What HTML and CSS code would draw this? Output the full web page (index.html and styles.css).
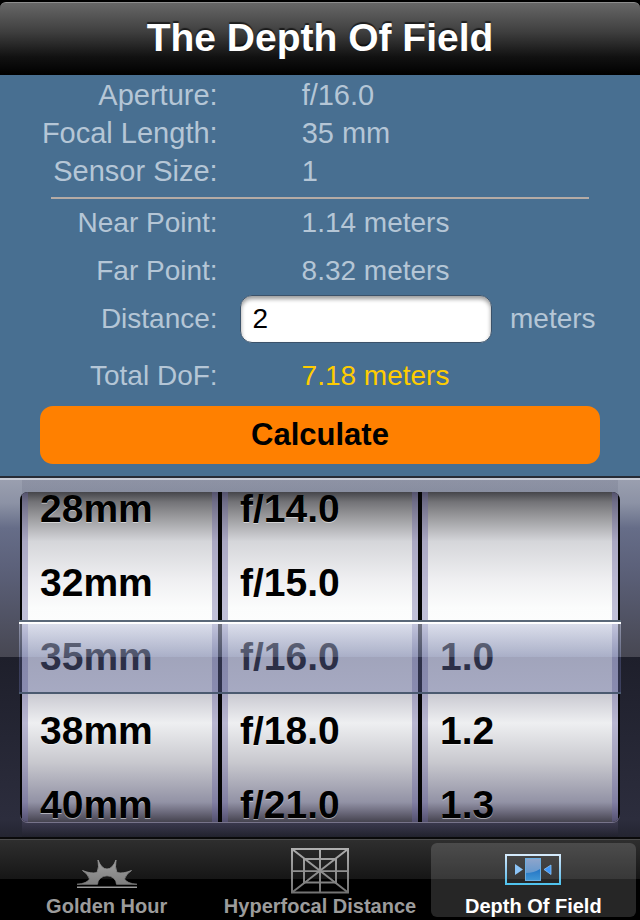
FILE: index.html
```html
<!DOCTYPE html>
<html lang="en">
<head>
  <meta charset="UTF-8" />
  <meta name="viewport" content="width=device-width, initial-scale=1.0"/>
  <title>The Depth Of Field</title>
  <link rel="stylesheet" href="styles.css">
</head>
<body>
  <header class="navbar">
    <h1>The Depth Of Field</h1>
  </header>

  <form class="panel">
    <!-- Lens settings -->
    <dl class="settings">
      <div class="row"><dt>Aperture:</dt><dd>f/16.0</dd></div>
      <div class="row"><dt>Focal Length:</dt><dd>35 mm</dd></div>
      <div class="row"><dt>Sensor Size:</dt><dd>1</dd></div>
    </dl>

    <!-- Results -->
    <dl class="results">
      <div class="row"><dt>Near Point:</dt><dd>1.14 meters</dd></div>
      <div class="row"><dt>Far Point:</dt><dd>8.32 meters</dd></div>
    </dl>
    <div class="distance">
      <label for="distance">Distance:</label>
      <input type="text" id="distance" value="2" inputmode="decimal" />
      <span>meters</span>
    </div>
    <dl class="total">
      <div class="row"><dt>Total DoF:</dt><dd>7.18 meters</dd></div>
    </dl>

    <button type="button" class="calculate">Calculate</button>
  </form>

  <!-- Picker wheels -->
  <section class="picker">
    <div class="wheels">
      <ul class="wheel" role="listbox" aria-label="Focal Length">
        <li role="option">28mm</li>
        <li role="option">32mm</li>
        <li role="option" aria-selected="true">35mm</li>
        <li role="option">38mm</li>
        <li role="option">40mm</li>
      </ul>
      <ul class="wheel" role="listbox" aria-label="Aperture">
        <li role="option">f/14.0</li>
        <li role="option">f/15.0</li>
        <li role="option" aria-selected="true">f/16.0</li>
        <li role="option">f/18.0</li>
        <li role="option">f/21.0</li>
      </ul>
      <ul class="wheel" role="listbox" aria-label="Sensor Size">
        <li class="empty" role="presentation"></li>
        <li class="empty" role="presentation"></li>
        <li role="option" aria-selected="true">1.0</li>
        <li role="option">1.2</li>
        <li role="option">1.3</li>
      </ul>
    </div>
    <div class="selection"></div>
  </section>

  <nav class="tabbar">
    <a href="#golden" class="tab">
      <svg width="60" height="50" viewBox="0 0 60 50" aria-hidden="true">
        <defs>
          <linearGradient id="grey" gradientUnits="userSpaceOnUse" x1="0" y1="0" x2="0" y2="50">
            <stop offset="0" stop-color="#b4b4b4"/>
            <stop offset="1" stop-color="#707070"/>
          </linearGradient>
        </defs>
        <path fill="url(#grey)" stroke="url(#grey)" stroke-width="0.8" d="M0 39.300 Q10 38.500 12.500 34 Q11 29 5.500 25.500 Q14 29 20 27.500 Q22.500 22 21 15 Q24.500 24 30 24 Q35.500 24 39 15 Q37.500 22 40 27.500 Q46 29 54.500 25.500 Q49 29 47.500 34 Q50 38.500 60 39.300 H39.500 A9.500 8.500 0 0 0 20.500 39.300 H0 Z"/>
        <path fill="#9a9a9a" d="M0 41.500 H60 V43 H0 Z"/>
      </svg>
      <span>Golden Hour</span>
    </a>
    <a href="#hyperfocal" class="tab">
      <svg width="60" height="50" viewBox="0 0 60 50" aria-hidden="true">
        <g fill="none" stroke="url(#grey)" stroke-width="2">
          <path d="M2 4 H58 V47.500 H2 Z M14 14 H46 V37.500 H14 Z"/>
          <path d="M2 4 L58 47.500 M58 4 L2 47.500 M30 4 V47.500"/>
          <path stroke-width="1.6" d="M2 26 H58 V26.100 H2"/>
        </g>
      </svg>
      <span>Hyperfocal Distance</span>
    </a>
    <a href="#dof" class="tab active" aria-current="page">
      <svg width="60" height="50" viewBox="0 0 60 50" aria-hidden="true">
        <defs>
          <linearGradient id="frame" x1="0" y1="0" x2="0" y2="1">
            <stop offset="0" stop-color="#d4eafb"/>
            <stop offset="0.55" stop-color="#8fccf2"/>
            <stop offset="1" stop-color="#4fc3ee"/>
          </linearGradient>
          <linearGradient id="glass" x1="0" y1="0" x2="0" y2="1">
            <stop offset="0" stop-color="#8fa5cb"/>
            <stop offset="1" stop-color="#4f93d0"/>
          </linearGradient>
          <linearGradient id="shine" x1="0" y1="0" x2="0" y2="1">
            <stop offset="0" stop-color="#2474c4"/>
            <stop offset="1" stop-color="#3f95d4"/>
          </linearGradient>
        </defs>
        <rect x="3" y="10" width="54" height="29" fill="none" stroke="url(#frame)" stroke-width="2"/>
        <rect x="22.500" y="13.500" width="15" height="22" fill="url(#glass)" stroke="#6aaee2"/>
        <path fill="url(#shine)" d="M23 28 Q31 28 37 24 V35 H23 Z"/>
        <path fill="#8cc4f6" d="M12 19 L20 24.500 L12 30 Z"/>
        <path fill="#3f97f8" stroke="#8cc4f6" stroke-width="0.8" d="M48 20 L41 24.500 L48 29.500 Z"/>
      </svg>
      <span>Depth Of Field</span>
    </a>
  </nav>
</body>
</html>
```

FILE: styles.css
```css
* {
  box-sizing: border-box;
}

body {
  margin: 0;
  min-height: 100vh;
  display: flex;
  flex-direction: column;
  font-family: "Liberation Sans", Arial, sans-serif;
  background: #000;
}

dl, dd, ul {
  margin: 0;
  padding: 0;
}

/* Top bar */
.navbar {
  margin-top: 2px;
  padding: 11px 0 14px;
  border-top: 1px solid #8e8e8e;
  border-radius: 6px 6px 0 0;
  background: linear-gradient(#676767, #3f3f3f 40%, #111 75%, #000);
  text-align: center;
}

.navbar h1 {
  margin: 0;
  color: #fff;
  font-size: 39px;
  line-height: 47px;
  text-shadow: 0 -2px 1px rgba(0, 0, 0, 0.6);
}

/* Values and distance */
.panel {
  padding-bottom: 12px;
  background: #486f91;
  color: #b5c6d6;
  font-size: 28px;
}

.row {
  display: grid;
  grid-template-columns: 34% 1fr;
  column-gap: 84px;
  line-height: 48px;
}

.row dt,
.distance label {
  text-align: right;
  white-space: nowrap;
}

.settings {
  margin: 0 8%;
  padding: 1px 0 7px;
  border-bottom: 2px solid #b5aba5;
  font-size: 29px;
}

.settings .row {
  margin: 0 -9.5%;
  line-height: 38px;
}

.distance {
  display: grid;
  grid-template-columns: 34% 1fr 130px;
  align-items: center;
  line-height: 48px;
}

.distance input {
  width: calc(100% - 40px);
  height: 48px;
  margin-left: 22px;
  padding: 0 12px;
  border: 1px solid #3b526a;
  border-radius: 12px;
  background: #fff;
  box-shadow: inset 0 3px 4px rgba(0, 0, 0, 0.4);
  font: inherit;
  color: #000;
}

.distance span {
  line-height: 44px;
}

.total {
  margin-top: 9px;
}

.total dd {
  color: #fc0;
}

.calculate {
  display: block;
  width: 87.5%;
  height: 58px;
  margin: 6px auto 0;
  border: none;
  border-radius: 13px;
  background: #ff8000;
  color: #000;
  font: bold 31px/54px "Liberation Sans", Arial, sans-serif;
  cursor: pointer;
}

/* Picker */
.picker {
  position: relative;
  padding: 14px 20px 15px;
  border-top: 2px solid #272b35;
  box-shadow: inset 0 2px 0 #c9ccd6;
  background:
    linear-gradient(rgba(120, 125, 145, 0.35), rgba(60, 60, 75, 0.3) 50%, rgba(85, 80, 110, 0.5) 95%, rgba(30, 30, 40, 0.4)) center / calc(100% - 44px) 100% no-repeat,
    linear-gradient(#9ba0b0, #8c92a5 7%, #666d88 14%, #5c617a 25%, #474752 50%, #1e1f2b 50%, #2c2d3d 95%, #242531);
}

.wheels {
  display: grid;
  grid-template-columns: repeat(3, 1fr);
  gap: 4px;
  height: 330px;
  padding: 0 2px;
  overflow: hidden;
  border-radius: 8px;
  background: #050505;
  box-shadow: 0 1px 0 #77738a;
}

.wheel {
  display: flex;
  flex-direction: column;
  justify-content: center;
  overflow: hidden;
  border: solid rgba(105, 100, 160, 0.4);
  border-width: 0 6px;
  background: linear-gradient(
    #45454a, #737377 3%, #959598 7%, #d5d6da 15%, #f0f0f2 27%, #fbfcfc 35%,
    #fff 50%, #fff 61%, #c9c9d1 61%, #eeeff1 70%, #c8c8ce 82%, #9292a5 94%, #6c6a7c 97%, #45434f);
  list-style: none;
}

.wheel li {
  flex: none;
  height: 74px;
  padding-left: 12px;
  color: #000;
  font-size: 39px;
  font-weight: bold;
  line-height: 74px;
  text-shadow: 0 1px 0 rgba(255, 255, 255, 0.5);
}

/* Glass bar over the selected row */
.selection {
  position: absolute;
  top: 142px;
  left: 19px;
  right: 19px;
  height: 74px;
  border-top: 2px solid #5a6878;
  border-bottom: 2px solid #4b5a70;
  box-shadow: inset 0 2px 0 #fff;
  background: linear-gradient(
    rgba(198, 203, 225, 0.56), rgba(121, 130, 168, 0.64) 50%,
    rgba(81, 87, 130, 0.54) 50%, rgba(85, 91, 138, 0.52));
  pointer-events: none;
}

/* Bottom tabs */
.tabbar {
  display: flex;
  flex: 1;
  padding: 4px 0 3px;
  border-top: 2px solid #0a0a0a;
  box-shadow: inset 0 1px 0 #4c4c4c;
  background: linear-gradient(#2f2f2f, #161616 40px, #000 40px);
}

.tab {
  display: flex;
  flex: 1 1 0;
  flex-direction: column;
  align-items: center;
  min-width: 0;
  margin: 0 4px;
  padding-top: 2px;
  border-radius: 6px;
  color: #9c9c9c;
  font-size: 20px;
  font-weight: bold;
  line-height: 22px;
  text-decoration: none;
  white-space: nowrap;
}

.tab.active {
  background: rgba(255, 255, 255, 0.15);
  color: #fff;
}
```
